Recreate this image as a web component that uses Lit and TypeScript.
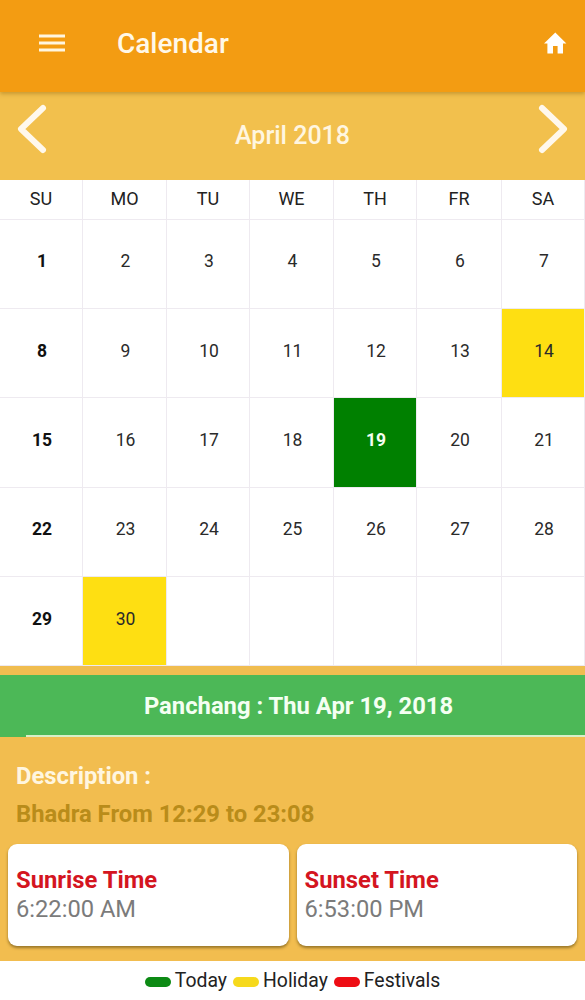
import { LitElement, html, css } from "lit";
import { customElement } from "lit/decorators.js";

const WEEK = ["SU", "MO", "TU", "WE", "TH", "FR", "SA"];
const DAYS: (number | null)[] = [
  ...Array.from({ length: 30 }, (_, i) => i + 1),
  null, null, null, null, null,
];
const HOLIDAY = new Set([14, 30]);

@customElement("app-root")
export class AppRoot extends LitElement {
  static styles = css`
    :host {
      display: block;
      width: 585px;
      height: 1000px;
      overflow: hidden;
      background: #fff;
      font-family: Roboto, "Liberation Sans", sans-serif;
      color: #212121;
    }
    .page { display: flex; flex-direction: column; height: 1000px; }
    .header {
      height: 92px;
      flex: none;
      box-sizing: border-box;
      background: #f39c12;
      display: flex;
      align-items: center;
      padding: 0 18px 6px 39px;
      color: #fff;
      box-shadow: 0 2px 4px rgba(120, 80, 0, .35);
      position: relative;
      z-index: 1;
    }
    .menu { width: 26px; height: 20px; display: block; flex: none; }
    .title { font-size: 28px; font-weight: 500; margin-left: 52px; flex: 1; color: #fff8e8; }
    .home { width: 24px; height: 24px; display: block; flex: none; }
    .month {
      height: 88px;
      flex: none;
      background: #f2c04d;
      display: flex;
      align-items: center;
      justify-content: space-between;
      padding: 0 16px;
    }
    .chev { width: 32px; height: 54px; display: block; margin-top: -14px; }
    .month-name { font-size: 25px; font-weight: 500; color: #fff6e0; margin-bottom: 2px; }
    .grid {
      flex: none;
      display: grid;
      grid-template-columns: 83px 84px 83px 84px 83px 85px 83px;
      grid-template-rows: 39.5px repeat(5, 89.4px);
      background: #fff;
    }
    .cell {
      box-sizing: border-box;
      border-right: 1px solid #eeeaf0;
      border-bottom: 1px solid #eeeaf0;
      display: flex;
      align-items: center;
      justify-content: center;
      font-size: 17.5px;
      color: #2a2a2a;
      padding: 0 0 5px 2px;
    }
    .cell.wk { font-size: 18px; color: #222; padding: 0 0 2px; }
    .cell.sun { font-weight: 700; color: #111; }
    .cell.today { background: #008000; color: #f4fff0; font-weight: 700; }
    .cell.hol { background: #fedf12; }
    .strip { height: 8.9px; flex: none; background: #f0bd50; }
    .panchang {
      height: 60px;
      flex: none;
      box-sizing: border-box;
      background: #4cb857;
      color: #f4fff2;
      font-size: 23.8px;
      font-weight: 700;
      display: flex;
      align-items: center;
      justify-content: center;
      padding: 2px 0 0 12px;
    }
    .rule { height: 2px; flex: none; background: #4cb857; padding-left: 26px; }
    .rule i { display: block; height: 2px; background: #d9efc8; }
    .info { flex: 1; background: #f2bd4f; padding: 25px 8px 0; display: flex; flex-direction: column; }
    .desc { font-size: 23.8px; font-weight: 700; color: #fff6e0; margin-left: 8px; line-height: 28px; }
    .bhadra { font-size: 23.8px; font-weight: 700; color: #b98c1a; margin: 10px 0 0 8px; line-height: 28px; }
    .cards { display: flex; gap: 8px; margin-top: 16px; }
    .card {
      flex: 1;
      height: 102px;
      box-sizing: border-box;
      background: #fff;
      border-radius: 9px;
      box-shadow: 0 2px 3px rgba(80, 60, 10, .55);
      padding: 22px 8px 0;
    }
    .card-t { font-size: 23.8px; font-weight: 700; color: #d4151f; line-height: 28px; }
    .card-v { font-size: 23.7px; color: #7b7b7b; line-height: 30px; }
    .legend {
      height: 39px;
      flex: none;
      background: #fff;
      display: flex;
      align-items: center;
      justify-content: center;
      font-size: 19.4px;
      color: #222;
      padding-right: 6px;
    }
    .pill { width: 26px; height: 10px; border-radius: 5px; margin: 2px 4px 0 6px; flex: none; }
    .pill.g { background: #0c8a14; }
    .pill.y { background: #f6d91c; }
    .pill.r { background: #ee0d14; }
  `;

  private dayClass(d: number | null, i: number) {
    const c = ["cell"];
    if (i % 7 === 0) c.push("sun");
    if (d === 19) c.push("today");
    if (d !== null && HOLIDAY.has(d)) c.push("hol");
    return c.join(" ");
  }

  render() {
    return html`
      <div class="page">
        <div class="header">
          <svg class="menu" viewBox="0 0 26 20" aria-hidden="true">
            <path d="M0 3h26M0 10h26M0 17h26" stroke="#fff6e0" stroke-width="3" fill="none" />
          </svg>
          <div class="title">Calendar</div>
          <svg class="home" viewBox="0 0 24 24" aria-hidden="true">
            <path fill="#fff" d="M10 22.5v-7.5h4.6v7.5h5.4v-10h3.4L12.3 1.5 1 12.5h3.4v10z" />
          </svg>
        </div>
        <div class="month">
          <svg class="chev" viewBox="0 0 32 54" aria-hidden="true">
            <path d="M27 6 5 27l22 21" stroke="#fff8ec" stroke-width="6" stroke-linecap="round" stroke-linejoin="round" fill="none" />
          </svg>
          <div class="month-name">April 2018</div>
          <svg class="chev" viewBox="0 0 32 54" aria-hidden="true">
            <path d="M5 6l22 21L5 48" stroke="#fff8ec" stroke-width="6" stroke-linecap="round" stroke-linejoin="round" fill="none" />
          </svg>
        </div>
        <div class="grid">
          ${WEEK.map((w) => html`<div class="cell wk">${w}</div>`)}
          ${DAYS.map((d, i) => html`<div class=${this.dayClass(d, i)}>${d ?? ""}</div>`)}
        </div>
        <div class="strip"></div>
        <div class="panchang">Panchang : Thu Apr 19, 2018</div>
        <div class="rule"><i></i></div>
        <div class="info">
          <div class="desc">Description :</div>
          <div class="bhadra">Bhadra From 12:29 to 23:08</div>
          <div class="cards">
            <div class="card">
              <div class="card-t">Sunrise Time</div>
              <div class="card-v">6:22:00 AM</div>
            </div>
            <div class="card">
              <div class="card-t">Sunset Time</div>
              <div class="card-v">6:53:00 PM</div>
            </div>
          </div>
        </div>
        <div class="legend">
          <span class="pill g"></span>Today<span class="pill y"></span>Holiday<span class="pill r"></span>Festivals
        </div>
      </div>
    `;
  }
}
